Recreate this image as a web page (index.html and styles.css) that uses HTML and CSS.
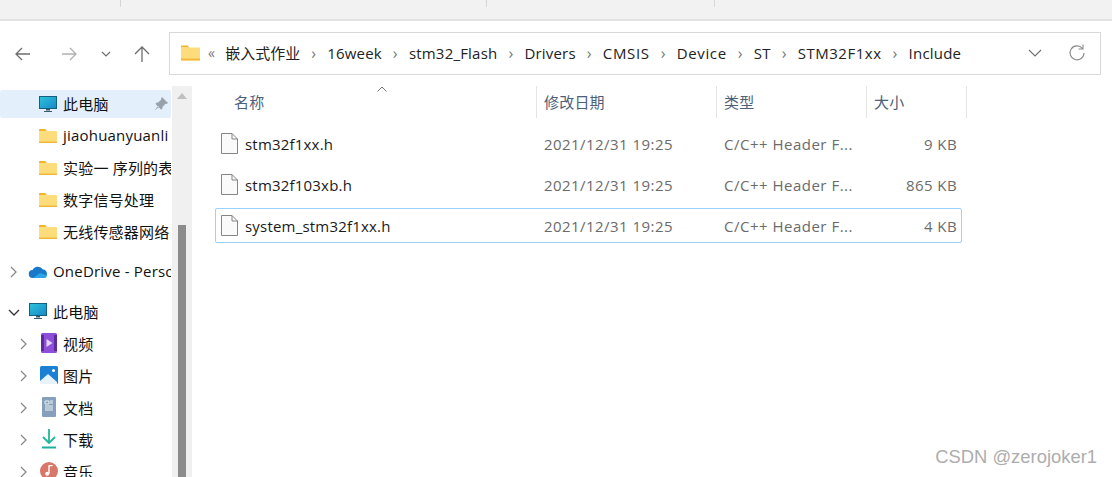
FILE: index.html
```html
<!DOCTYPE html>
<html lang="zh">
<head>
<meta charset="utf-8">
<title>Include</title>
<link rel="stylesheet" href="styles.css">
</head>
<body>
<div class="window">
  <div class="ribbon">
    <span class="tick"></span><span class="tick"></span><span class="tick"></span>
  </div>
  <div class="navbar">
    <div class="navbtns">
      <svg class="nav nav-back" width="18" height="18" viewBox="0 0 18 18"><path d="M16 9H2M8 3 2 9l6 6" fill="none" stroke="#6e6e6e" stroke-width="1.3"/></svg>
      <svg class="nav nav-fwd" width="18" height="18" viewBox="0 0 18 18"><path d="M2 9h14M10 3l6 6-6 6" fill="none" stroke="#b0b0b0" stroke-width="1.3"/></svg>
      <svg class="nav nav-down" width="10" height="8" viewBox="0 0 10 8"><path d="M1 2l4 4 4-4" fill="none" stroke="#6e6e6e" stroke-width="1.2"/></svg>
      <svg class="nav nav-up" width="18" height="18" viewBox="0 0 18 18"><path d="M9 17V2M2 9l7-7 7 7" fill="none" stroke="#6e6e6e" stroke-width="1.3"/></svg>
    </div>
    <div class="address">
      <svg class="addr-folder" width="19" height="16" viewBox="0 0 19 16"><path d="M0 1.5A1 1 0 0 1 1 .5h5.500l2 2H0z" fill="#f0b429"/><rect y="2.500" width="19" height="13" rx="1" fill="#fddc7c"/><rect y="13.500" width="19" height="2" fill="#f2b93b"/></svg>
      <span class="chev-double">«</span>
      <span class="crumb crumb-cjk">嵌入式作业</span><span class="sep">›</span>
      <span class="crumb">16week</span><span class="sep">›</span>
      <span class="crumb">stm32_Flash</span><span class="sep">›</span>
      <span class="crumb">Drivers</span><span class="sep">›</span>
      <span class="crumb crumb-wide">CMSIS</span><span class="sep">›</span>
      <span class="crumb crumb-wide">Device</span><span class="sep">›</span>
      <span class="crumb">ST</span><span class="sep">›</span>
      <span class="crumb crumb-mid">STM32F1xx</span><span class="sep">›</span>
      <span class="crumb">Include</span>
      <span class="addr-tools">
        <svg width="14" height="8" viewBox="0 0 14 8"><path d="M1 1l6 6 6-6" fill="none" stroke="#6e6e6e" stroke-width="1.1"/></svg>
        <svg width="18" height="18" viewBox="0 0 18 18"><path d="M14.500 4.500A7 7 0 1 0 16 9M15 .5v4.500h-4.500" fill="none" stroke="#8a8a8a" stroke-width="1.1"/></svg>
      </span>
    </div>
  </div>
  <div class="body">
    <nav class="sidebar">
      <div class="tree-row selected indent">
        <svg class="ico" width="18" height="16" viewBox="0 0 18 16"><use href="#pc"/></svg>
        <span class="label">此电脑</span>
        <svg class="pin" width="14" height="14" viewBox="0 0 14 14"><path d="M8 0l6 6-1.500 1-1-.3L8.500 10l-.2 2-1.300.5L1.500 7l.6-1.300 2-.2L7.300 2.500 7 1.500zM4 9l-3.500 4.500L5 10z" fill="#98a2ab"/></svg>
      </div>
      <div class="tree-row indent"><svg class="ico" width="18" height="14" viewBox="0 0 18 14"><use href="#folder"/></svg><span class="label">jiaohuanyuanli</span></div>
      <div class="tree-row indent"><svg class="ico" width="18" height="14" viewBox="0 0 18 14"><use href="#folder"/></svg><span class="label">实验一 序列的表示</span></div>
      <div class="tree-row indent"><svg class="ico" width="18" height="14" viewBox="0 0 18 14"><use href="#folder"/></svg><span class="label">数字信号处理</span></div>
      <div class="tree-row indent"><svg class="ico" width="18" height="14" viewBox="0 0 18 14"><use href="#folder"/></svg><span class="label">无线传感器网络</span></div>
      <div class="tree-row top root group">
        <svg class="arrow" width="7" height="12" viewBox="0 0 7 12"><path d="M1 1l5 5-5 5" fill="none" stroke="#8a8a8a" stroke-width="1.300"/></svg>
        <svg class="ico-root" width="20" height="14" viewBox="0 0 20 14"><path d="M5 13a4 4 0 0 1-.5-8A6 6 0 0 1 15 4.500a4.300 4.300 0 0 1 .5 8.500z" fill="#1a78c9"/><path d="M5 13l7-5 7 2.500a3 3 0 0 1-3 2.500z" fill="#2aa4ea"/></svg>
        <span class="label">OneDrive - Personal</span>
      </div>
      <div class="tree-row top root root-pc">
        <svg class="arrow-open" width="12" height="7" viewBox="0 0 12 7"><path d="M1 1l5 5 5-5" fill="none" stroke="#333" stroke-width="1.300"/></svg>
        <svg class="ico-root" width="18" height="16" viewBox="0 0 18 16"><use href="#pc"/></svg>
        <span class="label">此电脑</span>
      </div>
      <div class="tree-row child">
        <svg class="arrow" width="7" height="12" viewBox="0 0 7 12"><path d="M1 1l5 5-5 5" fill="none" stroke="#8a8a8a" stroke-width="1.300"/></svg>
        <svg class="ico-child" width="18" height="20" viewBox="0 0 18 20"><rect x="1" y="0" width="16" height="20" rx="1.500" fill="#8d4fd8"/><path d="M1 2h3v16H1zM14 2h3v16h-3z" fill="#5b2a9e"/><path d="M6.500 6l6 4-6 4z" fill="#e4d4f8"/></svg>
        <span class="label">视频</span>
      </div>
      <div class="tree-row child">
        <svg class="arrow" width="7" height="12" viewBox="0 0 7 12"><path d="M1 1l5 5-5 5" fill="none" stroke="#8a8a8a" stroke-width="1.300"/></svg>
        <svg class="ico-child" width="18" height="18" viewBox="0 0 18 18"><rect width="18" height="18" rx="1.500" fill="#1a80d4"/><path d="M0 15l8-7 9 8v2H0z" fill="#e8f2fb"/><circle cx="13.500" cy="4.500" r="1.500" fill="#fff"/></svg>
        <span class="label">图片</span>
      </div>
      <div class="tree-row child">
        <svg class="arrow" width="7" height="12" viewBox="0 0 7 12"><path d="M1 1l5 5-5 5" fill="none" stroke="#8a8a8a" stroke-width="1.300"/></svg>
        <svg class="ico-child" width="18" height="20" viewBox="0 0 18 20"><rect x="2" width="14" height="20" rx="1" fill="#86a0bc"/><path d="M5 4h4v3H5zM10 4h3M10 6h3M5 9h8M5 11h8M5 13h8" stroke="#eef3f8" fill="none"/></svg>
        <span class="label">文档</span>
      </div>
      <div class="tree-row child">
        <svg class="arrow" width="7" height="12" viewBox="0 0 7 12"><path d="M1 1l5 5-5 5" fill="none" stroke="#8a8a8a" stroke-width="1.300"/></svg>
        <svg class="ico-child" width="18" height="20" viewBox="0 0 18 20"><path d="M9 0v14M3 8l6 6 6-6" fill="none" stroke="#1fb89a" stroke-width="1.800"/><path d="M2 18.500h14" stroke="#1fb0a0" stroke-width="2"/></svg>
        <span class="label">下载</span>
      </div>
      <div class="tree-row child">
        <svg class="arrow" width="7" height="12" viewBox="0 0 7 12"><path d="M1 1l5 5-5 5" fill="none" stroke="#8a8a8a" stroke-width="1.300"/></svg>
        <svg class="ico-child" width="20" height="20" viewBox="0 0 20 20"><circle cx="10" cy="10" r="10" fill="#d9786a"/><path d="M10 4v9M10 4h4" stroke="#fff" stroke-width="1.600" fill="none"/><circle cx="8" cy="13" r="2.200" fill="#fff"/></svg>
        <span class="label">音乐</span>
      </div>
    </nav>
    <div class="scrollbar">
      <svg class="scroll-up" width="10" height="6" viewBox="0 0 10 6"><path d="M0 6l5-6 5 6z" fill="#bfbfbf"/></svg>
      <div class="thumb"></div>
    </div>
    <main class="files">
      <div class="heads">
        <div class="head head-name">名称<svg class="sort" width="10" height="6" viewBox="0 0 10 6"><path d="M.5 5.500 5 1l4.500 4.500" fill="none" stroke="#777" stroke-width="1"/></svg></div>
        <div class="head head-date">修改日期</div>
        <div class="head head-type">类型</div>
        <div class="head head-size">大小</div>
      </div>
      <div class="file-row">
        <div class="cell-name"><svg class="doc" width="17" height="21" viewBox="0 0 17 21"><use href="#doc"/></svg>stm32f1xx.h</div>
        <div class="cell-date">2021/12/31 19:25</div>
        <div class="cell-type">C/C++ Header F...</div>
        <div class="cell-size">9 KB</div>
      </div>
      <div class="file-row">
        <div class="cell-name"><svg class="doc" width="17" height="21" viewBox="0 0 17 21"><use href="#doc"/></svg>stm32f103xb.h</div>
        <div class="cell-date">2021/12/31 19:25</div>
        <div class="cell-type">C/C++ Header F...</div>
        <div class="cell-size">865 KB</div>
      </div>
      <div class="file-row focused">
        <div class="cell-name"><svg class="doc" width="17" height="21" viewBox="0 0 17 21"><use href="#doc"/></svg>system_stm32f1xx.h</div>
        <div class="cell-date">2021/12/31 19:25</div>
        <div class="cell-type">C/C++ Header F...</div>
        <div class="cell-size">4 KB</div>
      </div>
    </main>
  </div>
  <div class="watermark">CSDN @zerojoker1</div>
</div>
<svg class="defs" width="0" height="0">
  <defs>
    <linearGradient id="pcg" x1="0" y1="0" x2="1" y2="1"><stop offset="0" stop-color="#2bc4dc"/><stop offset="1" stop-color="#1a86c8"/></linearGradient>
    <g id="pc"><rect x=".5" y=".5" width="17" height="12" fill="url(#pcg)" stroke="#14607f"/><path d="M7 13h4v1.500H7zM5 15h8v1H5z" fill="#3a5a6a"/></g>
    <g id="folder"><path d="M0 1a1 1 0 0 1 1-1h5l2 2H0z" fill="#f0b429"/><rect y="2" width="18" height="12" rx="1" fill="#fddc7c"/><rect y="12.500" width="18" height="1.500" fill="#f2b93b"/></g>
    <g id="doc"><path d="M.5.500h10.500l5.500 5.500v14.500H.5z" fill="#fafafa" stroke="#858585"/><path d="M11 .5v5.500h5.500" fill="none" stroke="#858585"/></g>
  </defs>
</svg>
</body>
</html>
```
FILE: styles.css
```css
* { box-sizing: border-box; }
html, body { margin: 0; height: 100%; overflow: hidden; background: #fff; }
body { font-family: "Open Sans", "Noto Sans CJK SC", sans-serif; font-size: 15px; letter-spacing: .2px; color: #1a1a1a; }
.defs { position: absolute; }
.window { height: 477px; display: flex; flex-direction: column; overflow: hidden; position: relative; }

.ribbon { height: 21px; flex: none; background: #f2f2f2; border-bottom: 2px solid #e3e3e3; display: flex; }
.tick { width: 1px; height: 7px; background: #d6d6d6; }
.tick:nth-child(1) { margin-left: 120px; }
.tick:nth-child(2) { margin-left: 365px; }
.tick:nth-child(3) { margin-left: 227px; }

.navbar { height: 65px; flex: none; display: flex; align-items: flex-start; padding: 11px 11px 0 14px; }
.navbtns { width: 155px; height: 43px; flex: none; display: flex; align-items: center; }
.nav { flex: none; }
.nav-fwd { margin-left: 28px; }
.nav-down { margin-left: 23px; }
.nav-up { margin-left: 22px; }
.address { flex: 1; height: 43px; border: 1px solid #d9d9d9; display: flex; align-items: center; padding: 0 0 2px 11px; color: #222; }
.chev-double { margin: 0 10px 0 8px; color: #777; font-size: 14px; }
.crumb { white-space: nowrap; letter-spacing: .2px; }
.crumb-cjk { letter-spacing: 0; }
.crumb-wide { letter-spacing: .65px; }
.crumb-mid { letter-spacing: .53px; }
.sep { width: 27px; text-align: center; color: #777; flex: none; font-size: 16px; }
.addr-tools { margin-left: auto; display: flex; align-items: center; gap: 26px; padding-right: 14px; }

.body { flex: 1; min-height: 0; display: flex; }
.sidebar { width: 172px; flex: none; overflow: hidden; padding: 4px 1px 0 0; }
.tree-row { height: 28px; margin-bottom: 4px; display: flex; align-items: center; white-space: nowrap; overflow: hidden; color: #111; border-radius: 2px; }
.selected { background: #e3f0fb; }
.indent { padding-left: 39px; }
.indent .ico { margin-right: 6px; flex: none; }
.label { flex: none; margin-bottom: 2px; }
.pin { position: absolute; left: 154px; }
.group { margin-top: 12px; }
.top { margin-bottom: 12px; }
.root { padding-left: 10px; }
.root .arrow { flex: none; }
.root .ico-root { flex: none; margin: 0 5px 0 11px; }
.root-pc { padding-left: 8px; margin-bottom: 4px; }
.root .arrow-open { flex: none; }
.root-pc .ico-root { margin: 0 6px 2px 9px; }
.child { padding-left: 20px; }
.child .arrow { flex: none; }
.child .ico-child { flex: none; margin: 0 5px 2px 13px; width: 18px; }

.scrollbar { width: 20px; flex: none; background: #f0f0f0; position: relative; }
.scroll-up { position: absolute; left: 5px; top: 7px; }
.thumb { position: absolute; left: 6px; width: 8px; top: 139px; bottom: 0; background: #8c8c8c; }

.files { flex: 1; min-width: 0; padding-left: 25px; }
.heads { height: 32px; display: flex; color: #4c607a; }
.head { display: flex; align-items: center; border-right: 1px solid #e5e5e5; padding-left: 7px; padding-bottom: 2px; position: relative; }
.head-name { width: 320px; padding-left: 17px; }
.head-date { width: 180px; }
.head-type { width: 150px; }
.head-size { width: 100px; }
.sort { position: absolute; left: 160px; top: 0; }
.file-row { width: 747px; height: 35px; margin-top: 6px; display: flex; align-items: center; border: 1px solid transparent; color: #6b6b6b; margin-left: -2px; }
.heads + .file-row { margin-top: 8px; }
.focused { border-color: #99d1ff; border-radius: 2px; }
.cell-name { width: 328px; flex: none; display: flex; align-items: center; color: #1a1a1a; padding-left: 5px; }
.doc { margin-right: 7px; flex: none; }
.cell-date { width: 180px; flex: none; letter-spacing: .45px; }
.cell-type { width: 150px; flex: none; letter-spacing: .5px; }
.cell-size { flex: 1; text-align: right; padding-right: 4px; letter-spacing: .4px; }

.watermark { position: absolute; right: 15px; bottom: 9px; font-family: "Liberation Sans", sans-serif; font-size: 18.4px; letter-spacing: 0; color: #adadad; }
```
